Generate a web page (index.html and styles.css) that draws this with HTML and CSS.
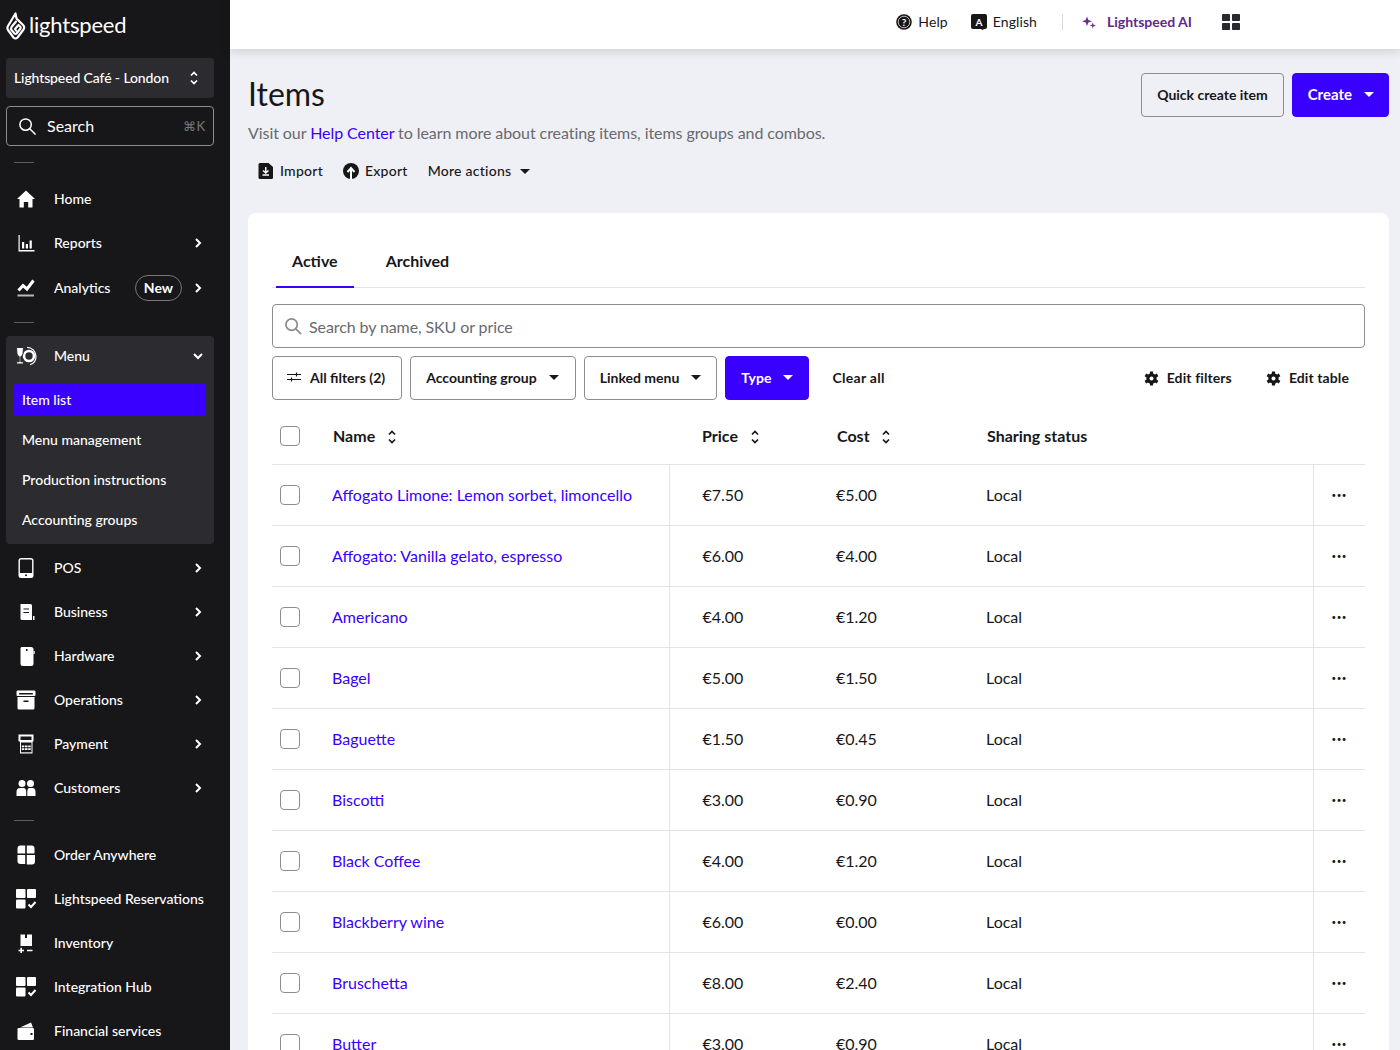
FILE: index.html
```html
<!DOCTYPE html>
<html lang="en">
<head>
    <meta charset="UTF-8">
    <meta name="viewport" content="width=device-width, initial-scale=1.0">
    <title>Items</title>
    <link rel="stylesheet" href="styles.css">
</head>
<body>
    <aside class="sidebar">
        <div class="logo">
            <svg class="logo-mark" viewBox="0 0 20 28" fill="none" stroke="#fff" stroke-width="2.2" stroke-linejoin="round" stroke-linecap="round">
                <path d="M9.5 1.5 L10.5 6.5 L17.5 13.5 Q18.8 15.5 17.5 17.5 L11.5 25.5 Q9.5 27.5 7.5 25.5 L2 18 Q0.8 16 2 14 Z"/>
                <path d="M10 9.5 L5.5 15 Q4.5 16.5 5.5 18 L8.5 21.5 Q9.5 22.5 10.5 21.5 L14.5 16.5 Q15 15.5 14.3 14.7 L12.5 13 L9 17 L10 18.5"/>
            </svg>
            <span>lightspeed</span>
        </div>

        <div class="store-select">
            <span>Lightspeed Café - London</span>
            <svg class="sort-icon" viewBox="0 0 10 16" fill="none" stroke="#fff" stroke-width="1.7"><path d="M2 5.5 L5 2.5 L8 5.5M2 10.5 L5 13.5 L8 10.5"/></svg>
        </div>

        <div class="side-search">
            <svg viewBox="0 0 20 20" fill="none" stroke="#fff" stroke-width="1.6"><circle cx="8" cy="8" r="6"/><path d="M12.4 12.4 L18.5 18.5"/></svg>
            <span class="side-search-label">Search</span>
            <span class="shortcut">⌘K</span>
        </div>

        <div class="side-divider first"></div>

        <a class="nav-item">
            <svg class="nav-icon" viewBox="0 0 24 24" fill="#fff"><path d="M12 3.5 L21 12 H18.5 V20.5 H14.2 V15 H9.8 V20.5 H5.5 V12 H3 Z"/></svg>
            <span>Home</span>
        </a>
        <a class="nav-item">
            <svg class="nav-icon" viewBox="0 0 24 24" fill="#fff"><path d="M4.5 4 H5.7 V19 H20.5 V20.5 H4.5 Z"/><path d="M8 11 H10.2 V17.5 H8 Z M11.8 13 H14 V17.5 H11.8 Z M15.6 9.5 H17.8 V17.5 H15.6 Z"/></svg>
            <span>Reports</span>
            <svg class="chevron" viewBox="0 0 12 12"><path d="M4 2 L8 6 L4 10"/></svg>
        </a>
        <a class="nav-item analytics">
            <svg class="nav-icon" viewBox="0 0 24 24" fill="none" stroke="#fff"><path d="M4.5 14.5 L9 9.5 L13 13 L19.5 4.5" stroke-width="3"/><path d="M3.5 19.5 H20" stroke="#b9b9bd" stroke-width="2"/></svg>
            <span>Analytics</span>
            <span class="badge">New</span>
            <svg class="chevron" viewBox="0 0 12 12"><path d="M4 2 L8 6 L4 10"/></svg>
        </a>

        <div class="side-divider"></div>

        <div class="nav-group">
            <a class="nav-item">
                <svg class="nav-icon" viewBox="0 0 24 24" fill="none"><circle cx="15" cy="12" r="5" stroke="#fff" stroke-width="2.6"/><path d="M13 3.3 A9 9 0 0 1 22 12 A9 9 0 0 1 16 20.8" stroke="#fff" stroke-width="1.2"/><path d="M2.5 3.5 H9.5 L9 10 Q8.5 12.3 6.8 12.5 V17.8 H9.5 V20 H2.5 V17.8 H5.2 V12.5 Q3.5 12.3 3 10 Z" fill="#fff" stroke="#2c2c30" stroke-width="1"/></svg>
                <span>Menu</span>
                <svg class="chevron" viewBox="0 0 12 12"><path d="M2 4 L6 8 L10 4"/></svg>
            </a>
            <a class="sub-item active"><span>Item list</span></a>
            <a class="sub-item"><span>Menu management</span></a>
            <a class="sub-item"><span>Production instructions</span></a>
            <a class="sub-item"><span>Accounting groups</span></a>
        </div>

        <a class="nav-item after-group">
            <svg class="nav-icon" viewBox="0 0 24 24" fill="none"><rect x="5.2" y="2.7" width="13.6" height="18.6" rx="2" stroke="#fff" stroke-width="1.4"/><rect x="5.2" y="17" width="13.6" height="4.3" fill="#fff"/><circle cx="12" cy="19.2" r="1" fill="#17171a"/></svg>
            <span>POS</span>
            <svg class="chevron" viewBox="0 0 12 12"><path d="M4 2 L8 6 L4 10"/></svg>
        </a>
        <a class="nav-item">
            <svg class="nav-icon" viewBox="0 0 24 24" fill="#fff"><path d="M6.5 4 H16.5 Q18 4 18 5.5 V20 H8 Q6.5 20 6.5 18.5 Z"/><path d="M9.5 9 H15 M9.5 12.5 H15" stroke="#17171a" stroke-width="1.2"/><rect x="19" y="16" width="1.5" height="4"/></svg>
            <span>Business</span>
            <svg class="chevron" viewBox="0 0 12 12"><path d="M4 2 L8 6 L4 10"/></svg>
        </a>
        <a class="nav-item">
            <svg class="nav-icon" viewBox="0 0 24 24" fill="#fff"><path d="M7.5 3 H17 Q19.5 3 19.5 5.5 V19.5 Q19.5 22 17 22 H8.5 Q6.5 22 6.5 20 V4 Z"/><rect x="12" y="5" width="1.5" height="2" fill="#17171a"/><rect x="19.5" y="7" width="1.2" height="3"/></svg>
            <span>Hardware</span>
            <svg class="chevron" viewBox="0 0 12 12"><path d="M4 2 L8 6 L4 10"/></svg>
        </a>
        <a class="nav-item">
            <svg class="nav-icon" viewBox="0 0 24 24" fill="#fff"><rect x="2.5" y="2.5" width="19" height="5.5" rx="1.2"/><rect x="5.2" y="5" width="13.6" height="1.5" fill="#17171a"/><path d="M3.5 9 H20.5 V20 Q20.5 21.5 19 21.5 H5 Q3.5 21.5 3.5 20 Z"/><rect x="9.5" y="12.5" width="5" height="1.5" fill="#17171a"/></svg>
            <span>Operations</span>
            <svg class="chevron" viewBox="0 0 12 12"><path d="M4 2 L8 6 L4 10"/></svg>
        </a>
        <a class="nav-item">
            <svg class="nav-icon" viewBox="0 0 24 24" fill="#fff"><path d="M4.5 2.5 H19.5 V9 L18.5 10 V21.5 H6 V10 L4.5 9 Z"/><rect x="6.5" y="4.5" width="11" height="3.5" fill="#17171a"/><rect x="7" y="10.5" width="10.5" height="9.8" fill="#17171a"/><path d="M7.8 13.5 H10.3 V15.3 H7.8 Z M11 13.5 H13.5 V15.3 H11 Z M14.2 13.5 H16.7 V15.3 H14.2 Z M7.8 16.3 H10.3 V18.1 H7.8 Z M11 16.3 H13.5 V18.1 H11 Z M14.2 16.3 H16.7 V18.1 H14.2 Z"/></svg>
            <span>Payment</span>
            <svg class="chevron" viewBox="0 0 12 12"><path d="M4 2 L8 6 L4 10"/></svg>
        </a>
        <a class="nav-item">
            <svg class="nav-icon" viewBox="0 0 24 24" fill="#fff"><circle cx="8" cy="7.5" r="3.5"/><circle cx="16.5" cy="7.5" r="3.5"/><path d="M2.5 20 V16 Q2.5 12 6 12 H10 Q12.2 12.5 12.2 16 V20 Z"/><path d="M13.3 20 V16 Q13.3 12.5 15 12 H18.5 Q21.5 12 21.5 16 V20 Z"/></svg>
            <span>Customers</span>
            <svg class="chevron" viewBox="0 0 12 12"><path d="M4 2 L8 6 L4 10"/></svg>
        </a>

        <div class="side-divider second"></div>

        <a class="nav-item">
            <svg class="nav-icon" viewBox="0 0 24 24" fill="#fff"><path d="M3.5 5.5 Q3.5 2.5 6.5 2.5 H11.2 V10.5 H3.5 Z M12.8 2.5 H17.5 Q20.5 2.5 20.5 5.5 V10.5 H12.8 Z M3.5 12 H11.2 V21 H6.5 Q3.5 21 3.5 18 Z M12.8 12 H21 V18.5 Q21 21.5 18 21.5 H12.8 Z"/></svg>
            <span>Order Anywhere</span>
        </a>
        <a class="nav-item">
            <svg class="nav-icon" viewBox="0 0 24 24" fill="#fff"><rect x="2" y="2" width="9.5" height="9" rx="1"/><rect x="13" y="2" width="9" height="9" rx="1"/><rect x="2" y="12.5" width="9.5" height="9" rx="1"/><path d="M14.5 17.5 L17 20 L21.5 15" fill="none" stroke="#fff" stroke-width="2"/></svg>
            <span>Lightspeed Reservations</span>
        </a>
        <a class="nav-item">
            <svg class="nav-icon" viewBox="0 0 24 24" fill="#fff"><path d="M6.5 3.5 H11 V7 H13 V3.5 H18 V15 H6.5 Z"/><path d="M4.5 19.5 H10 M7.2 16.8 V22 M13 19.5 H18.5" stroke="#fff" stroke-width="1.6"/></svg>
            <span>Inventory</span>
        </a>
        <a class="nav-item">
            <svg class="nav-icon" viewBox="0 0 24 24" fill="#fff"><rect x="2" y="2" width="9.5" height="9" rx="1"/><rect x="13" y="2" width="9" height="9" rx="1"/><rect x="2" y="12.5" width="9.5" height="9" rx="1"/><path d="M14.5 17.5 L17 20 L21.5 15" fill="none" stroke="#fff" stroke-width="2"/></svg>
            <span>Integration Hub</span>
        </a>
        <a class="nav-item">
            <svg class="nav-icon" viewBox="0 0 24 24" fill="#fff"><path d="M6 8.5 L17 3.5 L19 8.5 Z"/><rect x="3.5" y="9" width="16.5" height="12" rx="1.2"/><rect x="16.5" y="14" width="2" height="2" fill="#17171a"/></svg>
            <span>Financial services</span>
        </a>
    </aside>

    <div class="page">
        <header class="topbar">
            <a class="top-link">
                <svg class="top-icon" viewBox="0 0 16 16"><circle cx="8" cy="8" r="7.8" fill="#17171a"/><circle cx="8" cy="8" r="5.8" fill="none" stroke="#fff" stroke-width=".7"/><text x="8" y="11.5" text-anchor="middle" class="icon-letter">?</text></svg>
                <span>Help</span>
            </a>
            <a class="top-link lang">
                <svg class="top-icon" viewBox="0 0 16 16"><path d="M2 0 H14 Q16 0 16 2 V13 Q16 15 14 15 L13 15 L11.5 16 L10 15 H2 Q0 15 0 13 V2 Q0 0 2 0 Z" fill="#17171a"/><text x="8" y="11.5" text-anchor="middle" class="icon-letter">A</text></svg>
                <span>English</span>
            </a>
            <span class="top-divider"></span>
            <a class="top-link ai">
                <svg viewBox="0 0 14 14" class="ai-icon" fill="#6a2a8e"><path d="M5 1.5 L6.3 5 L10 6.3 L6.3 7.6 L5 11 L3.7 7.6 L0 6.3 L3.7 5 Z"/><path d="M10.8 7.5 L11.6 9.7 L14 10.5 L11.6 11.3 L10.8 13.5 L10 11.3 L7.7 10.5 L10 9.7 Z"/></svg>
                <span>Lightspeed AI</span>
            </a>
            <svg class="apps-icon" viewBox="0 0 18 16" fill="#2a2a2e"><rect width="8" height="7" rx=".8"/><rect x="10" width="8" height="7" rx=".8"/><rect y="9" width="8" height="7" rx=".8"/><rect x="10" y="9" width="8" height="7" rx=".8"/></svg>
        </header>

        <main class="content">
            <div class="title-row">
                <div>
                    <h1>Items</h1>
                    <p class="intro">Visit our <a>Help Center</a> to learn more about creating items, items groups and combos.</p>
                </div>
                <div class="title-actions">
                    <button class="btn">Quick create item</button>
                    <button class="btn primary create">Create <i class="caret"></i></button>
                </div>
            </div>

            <div class="page-actions">
                <a class="action">
                    <svg viewBox="0 0 16 16" fill="#17171a"><path d="M2 0 H10.5 L15 4 V14.5 Q15 16 13.5 16 H2 Q.5 16 .5 14.5 V1.5 Q.5 0 2 0 Z"/><path d="M7.75 4 V9.5 M5 7.5 L7.75 10 L10.5 7.5 M4.5 12 H11" stroke="#fff" stroke-width="1.5" fill="none"/></svg>
                    <span>Import</span>
                </a>
                <a class="action">
                    <svg viewBox="0 0 16 16" fill="#17171a"><circle cx="8" cy="8" r="8"/><path d="M8 16 V6.5 M4.5 9 L8 5 L11.5 9" stroke="#fff" stroke-width="2" fill="none"/></svg>
                    <span>Export</span>
                </a>
                <a class="action more"><span>More actions</span> <i class="caret dark"></i></a>
            </div>

            <section class="card">
                <nav class="tabs">
                    <a class="tab active">Active</a>
                    <a class="tab">Archived</a>
                </nav>

                <div class="search-box">
                    <svg viewBox="0 0 20 20" fill="none" stroke="#8b8b90" stroke-width="1.8"><circle cx="8" cy="8" r="6"/><path d="M12.4 12.4 L18 18"/></svg>
                    <span>Search by name, SKU or price</span>
                </div>

                <div class="filters">
                    <button class="btn small">
                        <svg class="sliders" viewBox="0 0 14 12" fill="none" stroke="#17171a" stroke-width="1.2"><path d="M0 3.5 H14 M0 8.5 H14"/><path d="M9.5 1.5 V5.5 M4.5 6.5 V10.5"/></svg>
                        All filters (2)
                    </button>
                    <button class="btn small">Accounting group <i class="caret dark"></i></button>
                    <button class="btn small tight">Linked menu <i class="caret dark"></i></button>
                    <button class="btn small tight primary">Type <i class="caret"></i></button>
                    <a class="clear">Clear all</a>
                    <a class="edit-link push">
                        <svg viewBox="0 0 16 16"><circle class="gear" cx="8" cy="8" r="5.5"/><path class="gear-teeth" d="M8 .5 V15.5 M1.5 4.25 L14.5 11.75 M1.5 11.75 L14.5 4.25"/><circle cx="8" cy="8" r="2.1" fill="#fff"/></svg>
                        <span>Edit filters</span>
                    </a>
                    <a class="edit-link last">
                        <svg viewBox="0 0 16 16"><circle class="gear" cx="8" cy="8" r="5.5"/><path class="gear-teeth" d="M8 .5 V15.5 M1.5 4.25 L14.5 11.75 M1.5 11.75 L14.5 4.25"/><circle cx="8" cy="8" r="2.1" fill="#fff"/></svg>
                        <span>Edit table</span>
                    </a>
                </div>

                <table class="items">
                    <colgroup>
                        <col class="col-check"><col class="col-name"><col class="col-price"><col class="col-cost"><col class="col-status"><col class="col-more">
                    </colgroup>
                    <thead>
                        <tr>
                            <th><span class="check"></span></th>
                            <th class="name-head">Name <svg class="sort" viewBox="0 0 10 16" fill="none" stroke="#17171a" stroke-width="1.7"><path d="M2 5.5 L5 2.5 L8 5.5M2 10.5 L5 13.5 L8 10.5"/></svg></th>
                            <th>Price <svg class="sort" viewBox="0 0 10 16" fill="none" stroke="#17171a" stroke-width="1.7"><path d="M2 5.5 L5 2.5 L8 5.5M2 10.5 L5 13.5 L8 10.5"/></svg></th>
                            <th>Cost <svg class="sort" viewBox="0 0 10 16" fill="none" stroke="#17171a" stroke-width="1.7"><path d="M2 5.5 L5 2.5 L8 5.5M2 10.5 L5 13.5 L8 10.5"/></svg></th>
                            <th>Sharing status</th>
                            <th></th>
                        </tr>
                    </thead>
                    <tbody>
                        <tr><td><span class="check"></span></td><td class="name"><a>Affogato Limone: Lemon sorbet, limoncello</a></td><td>€7.50</td><td>€5.00</td><td>Local</td><td class="more-cell">•••</td></tr>
                        <tr><td><span class="check"></span></td><td class="name"><a>Affogato: Vanilla gelato, espresso</a></td><td>€6.00</td><td>€4.00</td><td>Local</td><td class="more-cell">•••</td></tr>
                        <tr><td><span class="check"></span></td><td class="name"><a>Americano</a></td><td>€4.00</td><td>€1.20</td><td>Local</td><td class="more-cell">•••</td></tr>
                        <tr><td><span class="check"></span></td><td class="name"><a>Bagel</a></td><td>€5.00</td><td>€1.50</td><td>Local</td><td class="more-cell">•••</td></tr>
                        <tr><td><span class="check"></span></td><td class="name"><a>Baguette</a></td><td>€1.50</td><td>€0.45</td><td>Local</td><td class="more-cell">•••</td></tr>
                        <tr><td><span class="check"></span></td><td class="name"><a>Biscotti</a></td><td>€3.00</td><td>€0.90</td><td>Local</td><td class="more-cell">•••</td></tr>
                        <tr><td><span class="check"></span></td><td class="name"><a>Black Coffee</a></td><td>€4.00</td><td>€1.20</td><td>Local</td><td class="more-cell">•••</td></tr>
                        <tr><td><span class="check"></span></td><td class="name"><a>Blackberry wine</a></td><td>€6.00</td><td>€0.00</td><td>Local</td><td class="more-cell">•••</td></tr>
                        <tr><td><span class="check"></span></td><td class="name"><a>Bruschetta</a></td><td>€8.00</td><td>€2.40</td><td>Local</td><td class="more-cell">•••</td></tr>
                        <tr><td><span class="check"></span></td><td class="name"><a>Butter</a></td><td>€3.00</td><td>€0.90</td><td>Local</td><td class="more-cell">•••</td></tr>
                    </tbody>
                </table>
            </section>
        </main>
    </div>
</body>
</html>
```

FILE: styles.css
```css
/* General Styles */
* {
    box-sizing: border-box;
}

html, body {
    height: 100%;
}

body {
    font-family: Lato, "Noto Sans", sans-serif;
    background-color: #eff0f5;
    color: #17171a;
    margin: 0;
    display: flex;
    overflow: hidden;
}

/* Sidebar */
.sidebar {
    width: 230px;
    flex: none;
    height: 1050px;
    overflow: hidden;
    background-color: #17171a;
    color: #fff;
    padding: 0 16px 0 6px;
    font-size: 14px;
}

.logo {
    height: 58px;
    display: flex;
    align-items: center;
    gap: 3px;
    padding-bottom: 6px;
    font-size: 22px;
    letter-spacing: -0.2px;
    line-height: 1;
}

.logo span {
    padding-bottom: 2px;
}

.logo-mark {
    width: 20px;
    height: 28px;
}

.store-select {
    height: 40px;
    background-color: #2c2c30;
    border-radius: 4px;
    padding: 0 15px 0 8px;
    display: flex;
    align-items: center;
    justify-content: space-between;
    font-weight: 500;
    letter-spacing: -0.12px;
}

.store-select span {
    padding-bottom: 2px;
}

.sort-icon {
    width: 10px;
    height: 16px;
}

.side-search {
    height: 40px;
    margin-top: 8px;
    border: 1px solid #8c8c91;
    border-radius: 4px;
    padding: 0 8px 0 11px;
    display: flex;
    align-items: center;
}

.side-search svg {
    width: 19px;
    height: 19px;
}

.side-search-label {
    font-size: 16px;
    margin-left: 10px;
    padding-bottom: 2px;
    flex: 1;
}

.shortcut {
    font-size: 13px;
    color: #77777c;
}

.side-divider {
    width: 20px;
    height: 1px;
    background-color: #5c5c61;
    margin: 12px 0 13px 8px;
}

.side-divider.first {
    margin-top: 16px;
    margin-bottom: 14px;
}

.side-divider.second {
    margin-top: 10px;
    margin-bottom: 12px;
}

.nav-item {
    height: 44px;
    display: flex;
    align-items: center;
    padding: 0 10px 0 8px;
    gap: 16px;
    font-weight: 500;
}

.nav-item span {
    padding-bottom: 2px;
}

.nav-item > span:first-of-type {
    flex: 1;
}

.nav-item.analytics {
    margin-top: 1px;
}

.nav-icon {
    width: 24px;
    height: 24px;
    flex: none;
}

.chevron {
    width: 12px;
    height: 12px;
    fill: none;
    stroke: #fff;
    stroke-width: 2;
    flex: none;
}

.nav-item .badge {
    border: 1px solid #77777c;
    border-radius: 13px;
    height: 26px;
    padding: 0 8px 2px;
    display: flex;
    align-items: center;
    font-weight: 700;
    margin-right: -6px;
}

.nav-group {
    background-color: #2c2c30;
    border-radius: 4px;
    height: 208px;
    padding-bottom: 8px;
}

.nav-group .nav-item {
    height: 40px;
}

.sub-item {
    display: flex;
    align-items: center;
    height: 40px;
    margin: 0 8px;
    padding: 0 8px 2px;
    border-radius: 2px;
    font-weight: 500;
}

.sub-item.active {
    height: 32px;
    margin-top: 8px;
    margin-bottom: 4px;
    background-color: #3a00ff;
}

.after-group {
    margin-top: 2px;
}

/* Top bar */
.page {
    flex: 1;
    min-width: 0;
}

.topbar {
    height: 49px;
    background-color: #fff;
    box-shadow: 0 2px 10px rgba(0, 0, 0, 0.15);
    display: flex;
    align-items: center;
    justify-content: flex-end;
    padding: 0 160px 5px 0;
    font-size: 14px;
    position: relative;
}

.top-link {
    display: flex;
    align-items: center;
    gap: 6px;
    margin-right: 23px;
    letter-spacing: 0.1px;
}

.top-link span {
    padding-bottom: 2px;
}

.top-link.lang {
    margin-right: 25px;
}

.top-icon {
    width: 16px;
    height: 16px;
}

.icon-letter {
    font-size: 10px;
    font-weight: 700;
    fill: #fff;
}

.top-divider {
    width: 1px;
    height: 16px;
    background-color: #d6d6db;
    margin-right: 19px;
}

.top-link.ai {
    color: #5f2a8a;
    font-weight: 700;
    letter-spacing: 0;
    gap: 11px;
    margin-right: 30px;
}

.ai-icon {
    width: 14px;
    height: 14px;
}

.apps-icon {
    width: 18px;
    height: 16px;
}

/* Page header */
.content {
    padding: 24px 11px 0 18px;
}

.title-row {
    display: flex;
    justify-content: space-between;
    align-items: flex-start;
}

h1 {
    font-size: 32px;
    font-weight: 400;
    line-height: 42px;
    margin: 0;
}

.intro {
    font-size: 16px;
    line-height: 20px;
    letter-spacing: -0.07px;
    color: #69696e;
    margin: 8px 0 0;
}

.intro a {
    color: #3a00ff;
}

.title-actions {
    display: flex;
    gap: 8px;
}

.btn {
    height: 44px;
    padding: 0 15px 2px;
    background: transparent;
    border: 1px solid #8c8c91;
    border-radius: 4px;
    font-family: inherit;
    font-size: 14px;
    font-weight: 700;
    color: #17171a;
    display: flex;
    align-items: center;
}

.btn.primary {
    background-color: #3a00ff;
    border-color: #3a00ff;
    color: #fff;
}

.btn.create {
    font-size: 15px;
    padding-right: 14px;
}

.caret {
    display: inline-block;
    width: 0;
    height: 0;
    margin-left: 12px;
    border-left: 5px solid transparent;
    border-right: 5px solid transparent;
    border-top: 5px solid #fff;
}

.caret.dark {
    border-top-color: #17171a;
}

.page-actions {
    display: flex;
    align-items: center;
    gap: 20px;
    height: 20px;
    margin-top: 18px;
    padding-left: 10px;
    font-size: 14px;
    font-weight: 500;
    letter-spacing: 0.25px;
}

.action {
    display: flex;
    align-items: center;
    gap: 6px;
}

.action span {
    padding-bottom: 2px;
}

.action svg {
    width: 16px;
    height: 16px;
}

.action.more {
    gap: 0;
}

.action.more .caret {
    margin-left: 9px;
}

/* Card */
.card {
    background-color: #fff;
    border-radius: 8px;
    margin-top: 32px;
    padding: 25px 24px 0 24px;
}

.tabs {
    display: flex;
    gap: 16px;
    height: 50px;
    padding-left: 4px;
    border-bottom: 1px solid #e2e2e8;
    font-size: 16px;
    font-weight: 700;
}

.tab {
    padding: 0 16px;
    line-height: 46px;
}

.tab.active {
    border-bottom: 2px solid #3a00ff;
    height: 50px;
}

.search-box {
    height: 44px;
    margin-top: 16px;
    border: 1px solid #8c8c91;
    border-radius: 4px;
    display: flex;
    align-items: center;
    gap: 6px;
    padding: 0 11px;
    font-size: 16px;
    letter-spacing: -0.1px;
    color: #69696e;
}

.search-box svg {
    width: 19px;
    height: 19px;
}

.filters {
    display: flex;
    align-items: center;
    gap: 8px;
    margin-top: 8px;
    font-size: 14px;
    font-weight: 700;
}

.btn.small {
    padding: 0 16px 2px 15px;
}

.btn.small.tight {
    padding-right: 15px;
}

.sliders {
    width: 14px;
    height: 12px;
    margin-left: -1px;
    margin-right: 9px;
}

.clear {
    margin-left: 15px;
    padding-bottom: 2px;
    letter-spacing: 0.3px;
}

.edit-link {
    display: flex;
    align-items: center;
    gap: 8px;
    margin-left: 26px;
    letter-spacing: 0.1px;
}

.edit-link span {
    padding-bottom: 2px;
}

.edit-link.push {
    margin-left: auto;
}

.edit-link.last {
    margin-right: 16px;
}

.edit-link svg {
    width: 15px;
    height: 15px;
}

.gear {
    fill: #17171a;
}

.gear-teeth {
    fill: none;
    stroke: #17171a;
    stroke-width: 3.4;
}

/* Table */
.items {
    width: 1093px;
    table-layout: fixed;
    border-collapse: collapse;
    margin-top: 16px;
    font-size: 16px;
}

.col-check { width: 60px; }
.col-name { width: 337px; }
.col-price { width: 135px; }
.col-cost { width: 150px; }
.col-status { width: 359px; }
.col-more { width: 52px; }

.items th {
    height: 48px;
    text-align: left;
    font-weight: 700;
    padding: 0 0 8px 33px;
    border-bottom: 1px solid #e2e2e8;
}

.items th.name-head {
    padding-left: 1px;
}

.items th:nth-child(n+4) {
    padding-left: 33px;
}

.items td {
    height: 61px;
    padding: 0 0 0 32px;
    border-bottom: 1px solid #e2e2e8;
}

.items th:first-child,
.items td:first-child {
    padding-left: 8px;
}

.items td.name {
    padding-left: 0;
    border-right: 1px solid #e2e2e8;
}

.items td:nth-child(3) {
    padding-left: 33px;
}

.name a {
    color: #3a00ff;
}

.items td.more-cell {
    padding: 0;
    text-align: center;
    font-size: 8px;
    letter-spacing: 0.5px;
    border-left: 1px solid #e2e2e8;
}

.check {
    display: block;
    width: 20px;
    height: 20px;
    border: 1px solid #8c8c91;
    border-radius: 4px;
}

.sort {
    width: 10px;
    height: 16px;
    margin-left: 8px;
    vertical-align: -3px;
}
```
